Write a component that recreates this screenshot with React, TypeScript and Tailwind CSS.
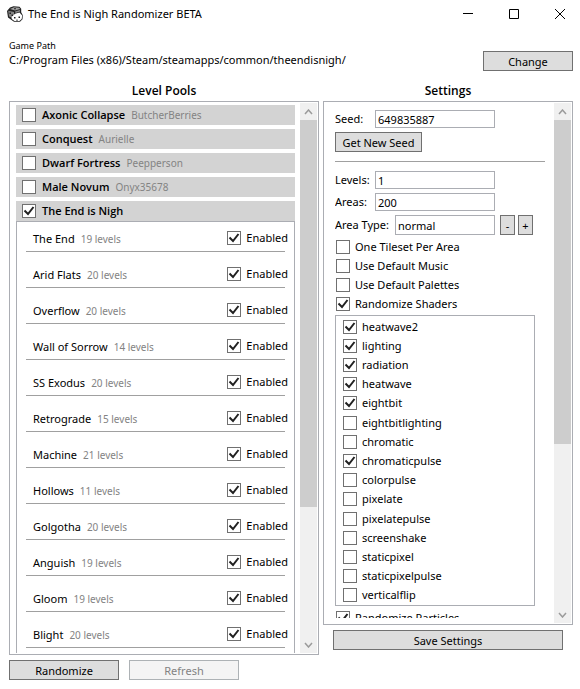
import { useId, type ReactNode } from "react";

const pools = [
  { name: "Axonic Collapse", author: "ButcherBerries", on: false },
  { name: "Conquest", author: "Aurielle", on: false },
  { name: "Dwarf Fortress", author: "Peepperson", on: false },
  { name: "Male Novum", author: "Onyx35678", on: false },
  { name: "The End is Nigh", author: "", on: true },
];

const areas: [string, number][] = [
  ["The End", 19],
  ["Arid Flats", 20],
  ["Overflow", 20],
  ["Wall of Sorrow", 14],
  ["SS Exodus", 20],
  ["Retrograde", 15],
  ["Machine", 21],
  ["Hollows", 11],
  ["Golgotha", 20],
  ["Anguish", 19],
  ["Gloom", 19],
  ["Blight", 20],
];

const options: [string, boolean][] = [
  ["One Tileset Per Area", false],
  ["Use Default Music", false],
  ["Use Default Palettes", false],
  ["Randomize Shaders", true],
];

const shaders: [string, boolean][] = [
  ["heatwave2", true],
  ["lighting", true],
  ["radiation", true],
  ["heatwave", true],
  ["eightbit", true],
  ["eightbitlighting", false],
  ["chromatic", false],
  ["chromaticpulse", true],
  ["colorpulse", false],
  ["pixelate", false],
  ["pixelatepulse", false],
  ["screenshake", false],
  ["staticpixel", false],
  ["staticpixelpulse", false],
  ["verticalflip", false],
];

function Check({ checked, className = "", children }: { checked: boolean; className?: string; children: ReactNode }) {
  return (
    <label className={`flex items-center gap-[5px] whitespace-nowrap ${className}`}>
      <span className="grid size-[14px] shrink-0">
        <input
          type="checkbox"
          defaultChecked={checked}
          className="peer col-start-1 row-start-1 size-[14px] appearance-none border border-[#707070] bg-white"
        />
        <svg
          viewBox="0 0 14 14"
          className="pointer-events-none invisible z-10 col-start-1 row-start-1 size-[14px] peer-checked:visible"
          fill="none"
          stroke="#212121"
          strokeWidth="2"
        >
          <path d="M2.500 6.500l3.500 3.500 5.500-7" />
        </svg>
      </span>
      {children}
    </label>
  );
}

function Button({ className = "", children, disabled }: { className?: string; children: ReactNode; disabled?: boolean }) {
  return (
    <button
      disabled={disabled}
      className={`flex h-5 items-center justify-center border border-[#707070] bg-[#dddddd] pt-[2px] disabled:border-[#adb2b5] disabled:bg-[#f4f4f4] disabled:text-[#838383] ${className}`}
    >
      {children}
    </button>
  );
}

function Field({ label, value, labelWidth, inputClass }: { label: string; value: string; labelWidth: string; inputClass: string }) {
  const id = useId();
  return (
    <>
      <label htmlFor={id} className={`shrink-0 whitespace-nowrap ${labelWidth}`}>
        {label}
      </label>
      <input id={id} defaultValue={value} className={`border border-[#abadb3] bg-white px-[2px] ${inputClass}`} />
    </>
  );
}

function ScrollBar({ thumb }: { thumb: string }) {
  return (
    <div className="flex w-[17px] shrink-0 flex-col bg-[#f0f0f0]">
      <button aria-label="Scroll up" className="grid h-[17px] shrink-0 place-items-center">
        <svg viewBox="0 0 9 6" className="h-[6px] w-[9px]" fill="none" stroke="#9b9b9b" strokeWidth="1.5">
          <path d="M1 5l3.500-4 3.500 4" />
        </svg>
      </button>
      <div className="min-h-0 flex-1">
        <div className={`bg-[#cdcdcd] ${thumb}`} />
      </div>
      <button aria-label="Scroll down" className="grid h-[17px] shrink-0 place-items-center">
        <svg viewBox="0 0 9 6" className="h-[6px] w-[9px]" fill="none" stroke="#9b9b9b" strokeWidth="1.5">
          <path d="M1 1l3.500 4 3.500-4" />
        </svg>
      </button>
    </div>
  );
}

function TitleBar() {
  return (
    <header className="flex h-7 items-center pl-[7px]">
      <svg viewBox="0 0 16 16" className="size-4 shrink-0">
        <path d="M3 1.500L6.500.2l6 .6 1.700 2v3.500l1.600 3-.3 4-2.500 2.500H7L4.500 14 1 11.500 0 5z" fill="#222" />
        <path d="M3 3L7 1.200l5.200.5 1 1.300L8 4.500z" fill="#a0a0a0" />
        <path d="M1.200 4.800L7 6v2.500L4.500 11.500 2 10.500z" fill="#858585" />
        <path d="M8 5.500l5-1.500v1.500L8.500 7z" fill="#8c8c8c" />
        <path d="M4.500 11L8 7.800l4.500-1.300L15.200 9.500l-.5 3.500-2.300 2H7.500L4.800 13z" fill="#fff" />
        <path d="M2.500 6.500H4V8H2.500zM4.500 8.500H6V10H4.500zM7 2.200h2v1H7zM7 11h1.500v1.500H7zM11.500 10.500H13V12h-1.500zM9.500 13.500h1V15h-1z" fill="#222" />
      </svg>
      <h1 className="ml-[5px] flex-1">The End is Nigh Randomizer BETA</h1>
      <button aria-label="Minimize" className="grid h-7 w-[46px] place-items-center">
        <svg viewBox="0 0 10 10" className="size-[10px]" stroke="#000" fill="none"><path d="M0 4.500h10" /></svg>
      </button>
      <button aria-label="Maximize" className="grid h-7 w-[46px] place-items-center">
        <svg viewBox="0 0 10 10" className="size-[10px]" stroke="#000" fill="none"><path d="M.5.5h9v9h-9z" /></svg>
      </button>
      <button aria-label="Close" className="grid h-7 w-[43px] place-items-center pl-[3px]">
        <svg viewBox="0 0 10 10" className="size-[10px]" stroke="#000" fill="none"><path d="M0 0l10 10M10 0L0 10" /></svg>
      </button>
    </header>
  );
}

export default function App() {
  return (
    <div className="flex h-screen flex-col bg-white font-['Noto_Sans','Open_Sans',sans-serif] text-[11px] leading-4 text-black">
      <TitleBar />
      <section className="flex h-[54px] items-start justify-between pr-[7px] pl-[9px]">
        <div className="pt-3">
          <div className="text-[9px] leading-3">Game Path</div>
          <div>C:/Program Files (x86)/Steam/steamapps/common/theendisnigh/</div>
        </div>
        <Button className="mt-[23px] w-[90px]">Change</Button>
      </section>
      <main className="flex min-h-0 flex-1 gap-1 pr-[7px] pb-[9px] pl-[9px]">
        <section className="flex min-w-0 flex-1 flex-col">
          <h2 className="h-[19px] pt-px text-center font-['Open_Sans','Noto_Sans',sans-serif] text-[12px] font-semibold">Level Pools</h2>
          <div className="flex min-h-0 flex-1 justify-between border border-[#abadb3] p-px">
            <div className="mr-[5px] ml-[5px] flex min-w-0 flex-1 flex-col gap-1 overflow-hidden pt-[2px]">
              {pools.map((p) => (
                <div key={p.name} className="h-5 shrink-0 bg-[#d3d3d3] pl-[6px]">
                  <Check checked={p.on} className="h-5">
                    <span className="ml-px font-['Open_Sans','Noto_Sans',sans-serif] font-semibold">{p.name}</span>
                    <span className="ml-px text-[10px] text-[#838383]">{p.author}</span>
                  </Check>
                </div>
              ))}
              <ul className="-mt-1 min-h-0 flex-1 overflow-hidden border border-b-0 border-[#abadb3] px-[9px]">
                {areas.map(([name, n], i) => (
                  <li key={name} className={`flex items-end border-b border-[#a0a0a0] pb-1 ${i ? "h-9" : "h-[30px]"}`}>
                    <span className="ml-[7px]">{name}</span>
                    <span className="ml-[6px] flex-1 text-[10px] text-[#838383]">{n} levels</span>
                    <Check checked className="-mr-[3px] mb-px">Enabled</Check>
                  </li>
                ))}
              </ul>
            </div>
            <ScrollBar thumb="h-3/4" />
          </div>
          <div className="mt-[5px] flex gap-[10px]">
            <Button className="w-[110px]">Randomize</Button>
            <Button className="w-[110px]" disabled>Refresh</Button>
          </div>
        </section>

        <section className="flex w-[250px] shrink-0 flex-col pb-[30px]">
          <h2 className="h-[19px] pt-px text-center font-['Open_Sans','Noto_Sans',sans-serif] text-[12px] font-semibold">Settings</h2>
          <div className="flex min-h-0 flex-1 border border-[#abadb3] p-px">
            <form className="mr-[9px] mb-[5px] ml-[10px] min-w-0 flex-1 overflow-hidden pt-[7px]">
              <div className="flex items-center">
                <Field label="Seed:" value="649835887" labelWidth="w-10" inputClass="h-[18px] w-[120px]" />
              </div>
              <Button className="mt-1 w-[87px]">Get New Seed</Button>
              <hr className="mt-[9px] border-[#a0a0a0]" />
              <div className="mt-[9px] flex items-center">
                <Field label="Levels:" value="1" labelWidth="w-10" inputClass="h-[18px] w-[120px]" />
              </div>
              <div className="mt-1 flex items-center">
                <Field label="Areas:" value="200" labelWidth="w-10" inputClass="h-[18px] w-[120px]" />
              </div>
              <div className="mt-1 flex items-center">
                <Field label="Area Type:" value="normal" labelWidth="w-[60px]" inputClass="h-5 w-[100px]" />
                <Button className="ml-[5px] w-[15px]">-</Button>
                <Button className="ml-[3px] w-[15px]">+</Button>
              </div>
              <div className="mt-[2px] ml-px">
                {options.map(([name, on]) => (
                  <Check key={name} checked={on} className="h-[19px]">{name}</Check>
                ))}
              </div>
              <div className="mt-[2px] flex h-[291px] w-[200px] flex-col justify-between border border-[#abadb3] pt-px pl-[7px]">
                {shaders.map(([name, on]) => (
                  <Check key={name} checked={on} className="h-[19px]">{name}</Check>
                ))}
              </div>
              <Check checked className="mt-[2px] ml-px h-[19px]">Randomize Particles</Check>
            </form>
            <ScrollBar thumb="h-2/3" />
          </div>
          <Button className="mx-[10px] mt-[5px]">Save Settings</Button>
        </section>
      </main>
    </div>
  );
}
